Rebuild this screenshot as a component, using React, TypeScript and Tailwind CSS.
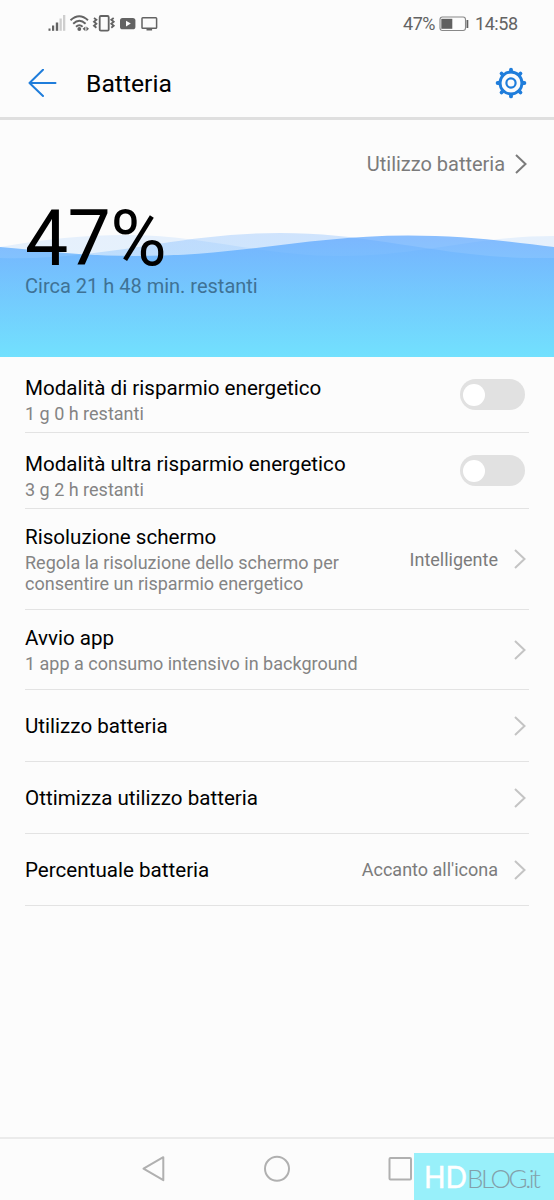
import { useState } from 'react';

type Row = {
  title: string;
  subtitle?: string;
  value?: string;
  height: string;
};

const rows: Row[] = [
  {
    title: 'Risoluzione schermo',
    subtitle: 'Regola la risoluzione dello schermo per consentire un risparmio energetico',
    value: 'Intelligente',
    height: 'h-[101px]',
  },
  { title: 'Avvio app', subtitle: '1 app a consumo intensivo in background', height: 'h-20' },
  { title: 'Utilizzo batteria', height: 'h-[72px]' },
  { title: 'Ottimizza utilizzo batteria', height: 'h-[72px]' },
  { title: 'Percentuale batteria', value: "Accanto all'icona", height: 'h-[72px]' },
];

const Chevron = ({ className }: { className: string }) => (
  <svg className={className} width="14" height="22" viewBox="0 0 14 22" fill="none" stroke="currentColor" strokeWidth="2">
    <path d="M2 2 L11.5 11 L2 20" />
  </svg>
);

const StatusBar = () => (
  <div className="h-[47px] flex items-center justify-between pl-12 pr-9 text-[#636363]">
    <svg width="112" height="20" viewBox="48 14 112 20" fill="none" stroke="currentColor">
      <g stroke="none" fill="currentColor">
        <rect x="48.5" y="28.5" width="2" height="2.3" />
        <rect x="52" y="25.5" width="2.2" height="5.3" />
        <rect x="55.8" y="22.5" width="2.4" height="8.3" />
        <rect x="59.5" y="18.5" width="2.3" height="12.3" opacity="0.3" />
        <rect x="63" y="15" width="2.3" height="15.8" opacity="0.3" />
      </g>
      <path d="M70.5 20.3 Q79.3 12.2 88 20.3 M73.2 23.7 Q79.3 18 85.6 23.7 M76 26.7 Q79.3 23.8 82.6 26.7" strokeWidth="1.9" />
      <circle cx="79.3" cy="29" r="1.9" fill="currentColor" stroke="none" />
      <path d="M82.6 28.8 l2.8 -2.4 v4.8 z M89 28.8 l-2.6 -2.4 v4.8 z" fill="currentColor" stroke="none" />
      <rect x="99.7" y="16" width="9" height="14.6" rx="1.2" strokeWidth="1.8" />
      <path d="M94 18 l2.4 1.8 l-2.4 2 l2.4 2 l-2.4 2 l2.4 2 M113.7 18 l-2.4 1.8 l2.4 2 l-2.4 2 l2.4 2 l-2.4 2" strokeWidth="1.8" />
      <rect x="120" y="18" width="15.4" height="11.3" rx="2.6" fill="currentColor" stroke="none" />
      <path d="M126 20.8 v5.6 l4.8 -2.8 z" fill="#fcfcfc" stroke="none" />
      <rect x="142" y="17.7" width="14.6" height="10.6" rx="0.8" strokeWidth="1.5" />
      <path d="M146.5 29.7 h5.6" strokeWidth="1.6" />
    </svg>
    <div className="flex items-center text-[18px] leading-none">
      <span className="w-[32px] tracking-[-0.45px]">47%</span>
      <svg className="ml-[4px] mr-[5px]" width="31" height="16" viewBox="0 0 31 16">
        <rect x="1" y="1" width="25.5" height="13.5" rx="2.4" fill="none" stroke="#888" strokeWidth="1.1" />
        <rect x="2.3" y="2.8" width="11" height="10" fill="#606060" />
        <path d="M28.4 4 v8" stroke="#606060" strokeWidth="1.8" />
      </svg>
      <span className="w-[43px] tracking-[-0.45px]">14:58</span>
    </div>
  </div>
);

const teeth = [0, 45, 90, 135, 180, 225, 270, 315];

const Header = () => (
  <header className="h-[73px] flex items-center pt-0.5 pl-7 pr-[27px] border-b-[3px] border-[#dfdfdf]">
    <svg width="29" height="29" viewBox="0 0 29 29" fill="none" stroke="#1f7ddb" strokeWidth="2" strokeLinecap="round" strokeLinejoin="round">
      <path d="M27.5 14 H1.5 M15 0.8 L1.5 14 L15 27" />
    </svg>
    <h1 className="ml-[29px] pt-[3px] flex-1 text-[24.7px] leading-none text-black">Batteria</h1>
    <svg width="32" height="32" viewBox="0 0 32 32" fill="none" stroke="#1f7ddb">
      <circle cx="16" cy="16" r="11" strokeWidth="2.9" />
      <circle cx="16" cy="16" r="4.6" strokeWidth="2.2" />
      {teeth.map((deg) => (
        <path key={deg} d="M16 4.4 V2.6" strokeWidth="3.8" strokeLinecap="round" transform={`rotate(${deg} 16 16)`} />
      ))}
    </svg>
  </header>
);

const BatteryHero = () => (
  <section className="relative h-[237px]">
    <svg className="absolute inset-0" width="554" height="237" viewBox="0 120 554 237">
      <defs>
        <linearGradient id="water" gradientUnits="userSpaceOnUse" x1="0" y1="235" x2="0" y2="357">
          <stop offset="0" stopColor="#509eff" />
          <stop offset="1" stopColor="#4bd9ff" />
        </linearGradient>
      </defs>
      <g fill="url(#water)">
        <path opacity="0.13" d="M0 247 C45 239 85 235 125 235 C205 235 260 256 340 256 C420 256 475 236 554 236 V357 H0 Z" />
        <path opacity="0.26" d="M0 258 C105 261 175 233 280 233 C380 233 445 260 554 258 V357 H0 Z" />
        <path opacity="0.66" d="M0 247 C45 251 85 256 135 256 C240 256 310 235.5 408 235.5 C465 235.5 515 242 554 247 V357 H0 Z" />
      </g>
    </svg>
    <div className="relative flex items-center justify-end pt-8 pr-[26px] text-[#7b7b7b]">
      <span className="text-[20px] leading-6 tracking-[-0.02px]">Utilizzo batteria</span>
      <Chevron className="ml-[9px]" />
    </div>
    <div className="relative pl-[25px] pt-7">
      <p className="text-[77px] leading-[70px] tracking-[-0.7px] text-black">47%</p>
      <p className="text-[20px] leading-6 text-[#3f7295]">Circa 21 h 48 min. restanti</p>
    </div>
  </section>
);

const ToggleRow = ({ title, subtitle }: { title: string; subtitle: string }) => {
  const [on, setOn] = useState(false);

  return (
    <div className="h-[76px] ml-[25px] mr-[25px] pr-1 flex items-center justify-between border-b border-[#e3e3e3]">
      <div className="pt-3">
        <p className="text-[20.6px] leading-[27px] text-black">{title}</p>
        <p className="text-[18px] leading-[24px] text-[#848484]">{subtitle}</p>
      </div>
      <button
        onClick={() => setOn(!on)}
        className={`w-[65px] h-[31px] p-[3px] rounded-full flex items-center ${on ? 'bg-[#1f7ddb] justify-end' : 'bg-[#e1e1e1]'}`}
      >
        <span className="size-[22px] rounded-full bg-white" />
      </button>
    </div>
  );
};

const LinkRow = ({ title, subtitle, value, height }: Row) => (
  <div className={`${height} ml-[25px] mr-[25px] pr-[2px] flex items-center border-b border-[#e3e3e3]`}>
    <div className={`flex-1 ${subtitle ? 'pb-0.5' : 'pt-0.5'}`}>
      <p className="text-[20.6px] leading-[29px] text-black">{title}</p>
      {subtitle && <p className="max-w-[340px] text-[18px] leading-[21px] text-[#848484]">{subtitle}</p>}
    </div>
    {value && <span className="text-[18px] text-[#7b7b7b]">{value}</span>}
    <Chevron className="ml-[15px] text-[#c4c4c4]" />
  </div>
);

const NavBar = () => (
  <nav className="relative h-[63px] border-t-2 border-[#ebebeb] flex items-center">
    <svg width="554" height="61" viewBox="0 1139 554 61" fill="none" stroke="#b0b0b0" strokeWidth="2" strokeLinejoin="round">
      <path d="M143.5 1168.7 L163.3 1157.2 V1180.2 Z" />
      <circle cx="277" cy="1168.7" r="12" />
      <rect x="389.5" y="1158" width="21.5" height="21.5" rx="1" />
    </svg>
    <div className="absolute right-0 bottom-0 w-[140px] h-[47px] bg-[#98f0fa]">
      <svg width="140" height="47" viewBox="0 0 140 47" fontFamily="Lato, sans-serif">
        <text x="10" y="34.5" fontSize="31.5" fill="#ffffff" stroke="#ffffff" strokeWidth="0.5" textLength="43" lengthAdjust="spacingAndGlyphs">HD</text>
        <text x="53" y="34.5" fontSize="26" fontWeight="300" fill="#83a0aa" textLength="74" lengthAdjust="spacing">BLOG.it</text>
      </svg>
    </div>
  </nav>
);

export default function App() {
  return (
    <div className="w-[554px] h-[1200px] flex flex-col overflow-hidden bg-[#fcfcfc] font-[Roboto,sans-serif]">
      <StatusBar />
      <Header />
      <BatteryHero />
      <main className="flex-1">
        <ToggleRow title="Modalità di risparmio energetico" subtitle="1 g 0 h restanti" />
        <ToggleRow title="Modalità ultra risparmio energetico" subtitle="3 g 2 h restanti" />
        {rows.map((row) => (
          <LinkRow key={row.title} {...row} />
        ))}
      </main>
      <NavBar />
    </div>
  );
}
